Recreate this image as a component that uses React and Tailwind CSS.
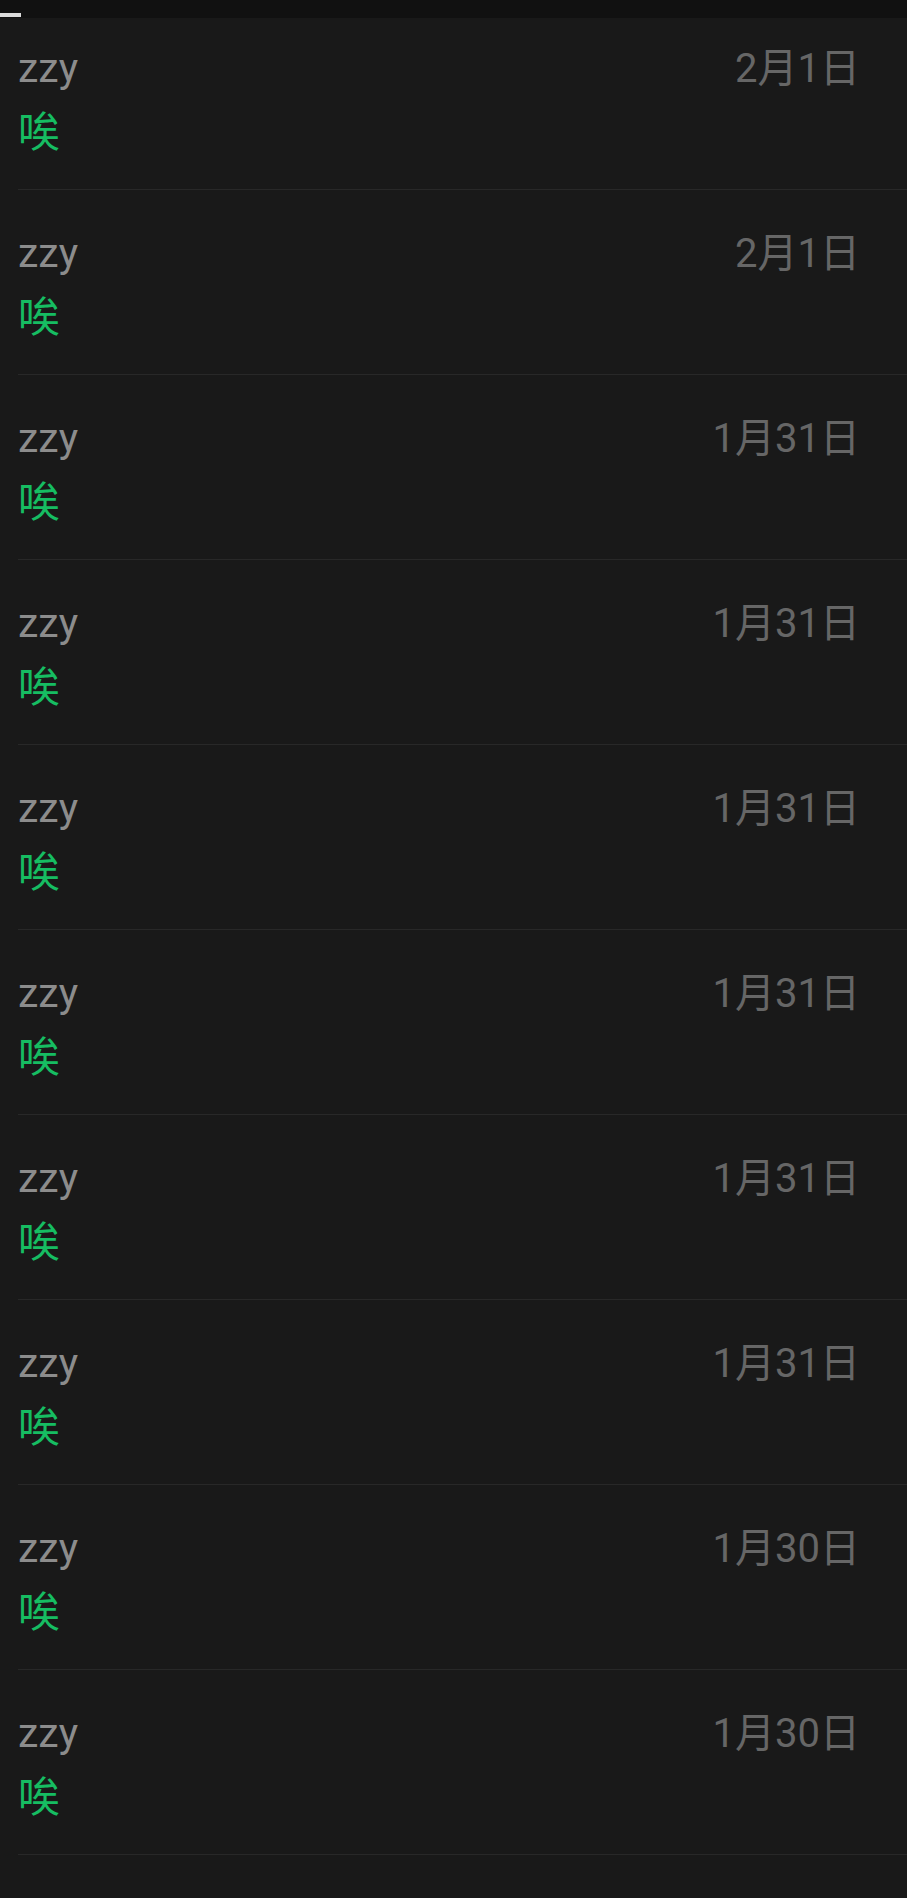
// App.jsx — chat list (dark)
const rows = [
  { name: "zzy", msg: "唉", date: "2月1日" },
  { name: "zzy", msg: "唉", date: "2月1日" },
  { name: "zzy", msg: "唉", date: "1月31日" },
  { name: "zzy", msg: "唉", date: "1月31日" },
  { name: "zzy", msg: "唉", date: "1月31日" },
  { name: "zzy", msg: "唉", date: "1月31日" },
  { name: "zzy", msg: "唉", date: "1月31日" },
  { name: "zzy", msg: "唉", date: "1月31日" },
  { name: "zzy", msg: "唉", date: "1月30日" },
  { name: "zzy", msg: "唉", date: "1月30日" },
];

function Row({ name, msg, date, first }) {
  return (
    <div className={first ? "h-[172px] pt-[26px]" : "h-[185px] pt-[39px]"}>
      <div className="flex h-full flex-col border-b border-[#282828] ml-[18px]">
        <div className="flex items-baseline justify-between pr-[47px]">
          <span className="text-[41px] leading-[48px] text-[#8c8c8c]">{name}</span>
          <span className="text-[40px] leading-[48px] text-[#666666]">{date}</span>
        </div>
        <div className="mt-[12px] text-[42px] leading-[56px] text-[#16bd62]">{msg}</div>
      </div>
    </div>
  );
}

export default function App() {
  return (
    <div
      className="min-h-[1898px] w-[907px] bg-[#191919]"
      style={{ fontFamily: 'Roboto, "Noto Sans CJK SC", sans-serif' }}
    >
      <div className="h-[18px] bg-[#111111] flex items-end pb-px">
        <div className="h-[4px] w-[21px] bg-[#dcdcdc]" />
      </div>
      {rows.map((r, i) => (
        <Row key={i} {...r} first={i === 0} />
      ))}
    </div>
  );
}
